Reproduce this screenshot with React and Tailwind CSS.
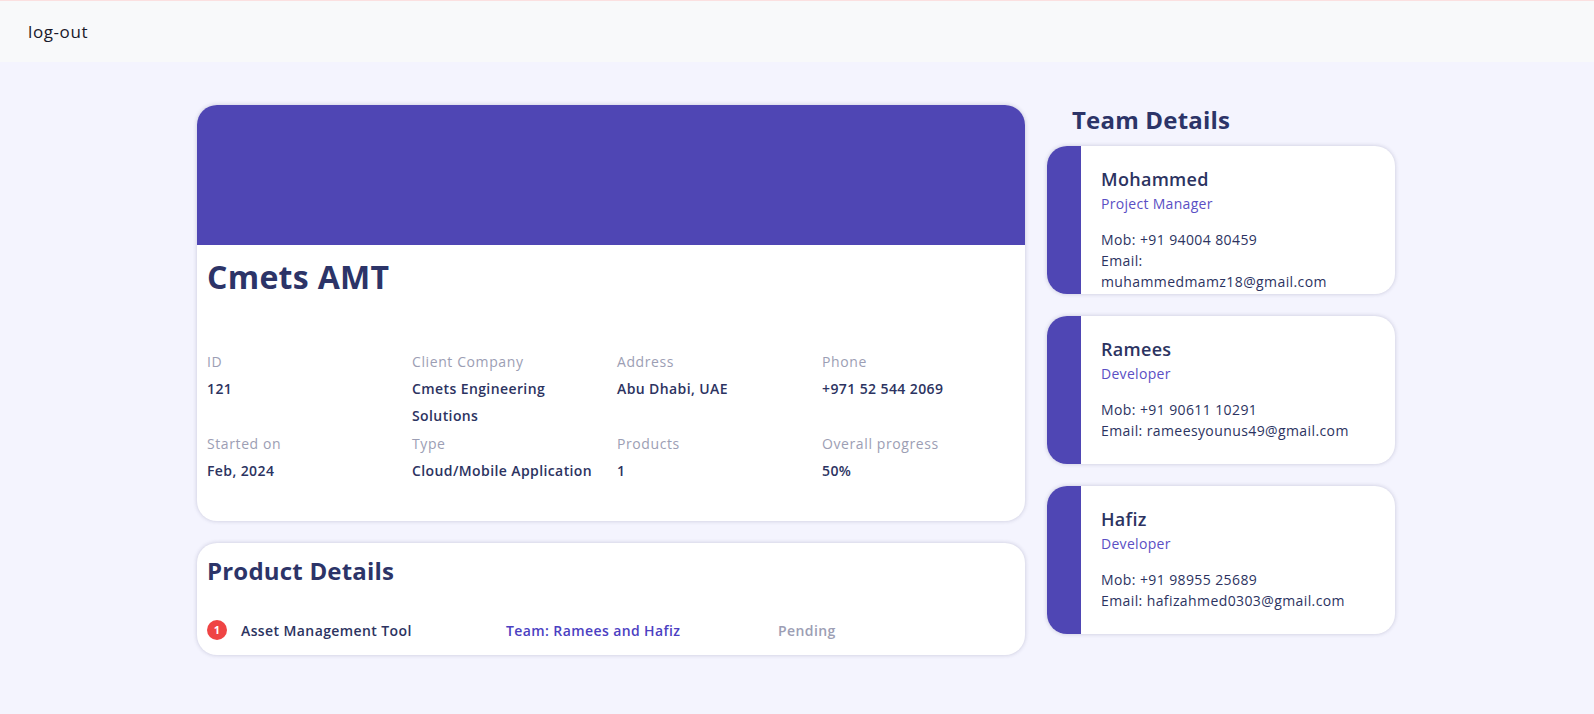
import React from "react";

const fields = [
  [
    { label: "ID", value: "121" },
    { label: "Client Company", value: "Cmets Engineering Solutions" },
    { label: "Address", value: "Abu Dhabi, UAE" },
    { label: "Phone", value: "+971 52 544 2069" },
  ],
  [
    { label: "Started on", value: "Feb, 2024" },
    { label: "Type", value: "Cloud/Mobile Application" },
    { label: "Products", value: "1" },
    { label: "Overall progress", value: "50%" },
  ],
];

const team = [
  { name: "Mohammed", role: "Project Manager", mob: "+91 94004 80459", email: "muhammedmamz18@gmail.com", wrap: true },
  { name: "Ramees", role: "Developer", mob: "+91 90611 10291", email: "rameesyounus49@gmail.com" },
  { name: "Hafiz", role: "Developer", mob: "+91 98955 25689", email: "hafizahmed0303@gmail.com" },
];

function TeamCard({ m }) {
  return (
    <div className="flex h-[148px] overflow-hidden rounded-[20px] bg-white shadow-[0_0_4px_rgba(40,40,90,0.22)]">
      <div className="w-[34px] shrink-0 bg-[#4f46b4]" />
      <div className="flex-1 pl-[20px] pr-2 pt-[20px]">
        <div className="text-[18px] font-semibold leading-[27px] tracking-[0.3px] text-[#2c3361]">{m.name}</div>
        <div className="text-[14px] leading-[22px] tracking-[0.3px] text-[#5a4fc4]">{m.role}</div>
        <div className="mt-[14px] text-[14px] leading-[21px] tracking-[0.4px] text-[#2c3361]">
          <div>Mob: {m.mob}</div>
          {m.wrap ? (
            <>
              <div>Email:</div>
              <div>{m.email}</div>
            </>
          ) : (
            <div>Email: {m.email}</div>
          )}
        </div>
      </div>
    </div>
  );
}

export default function App() {
  return (
    <div className="min-h-screen bg-[#f4f4fe] font-['Open_Sans',sans-serif]">
      <header className="flex h-[62px] items-center border-t border-[#fbe0e0] bg-[#f8f9fa] pl-[28px]">
        <span className="text-[17px] tracking-[0.6px] text-[#1a1a2a]">log-out</span>
      </header>

      <main className="mx-auto flex w-[1200px] pt-[43px]">
        <div className="flex w-[828px] flex-col gap-[22px]">
          <section className="overflow-hidden rounded-[20px] bg-white shadow-[0_0_4px_rgba(40,40,90,0.22)]">
            <div className="h-[140px] bg-[#4f46b4]" />
            <div className="flex flex-col gap-[2px] px-[10px] pb-[37px] pt-[8px]">
              <h1 className="mb-[46px] text-[32px] font-bold leading-[48px] tracking-[0.3px] text-[#2c3468]">Cmets AMT</h1>
              {fields.map((row, i) => (
                <div key={i} className="grid grid-cols-[205px_205px_205px_1fr]">
                  {row.map((f) => (
                    <div key={f.label}>
                      <div className="text-[14px] leading-[26px] tracking-[0.6px] text-[#9c9eb4]">{f.label}</div>
                      <div className="max-w-[190px] text-[14px] font-semibold leading-[27px] tracking-[0.4px] text-[#2c3361]">{f.value}</div>
                    </div>
                  ))}
                </div>
              ))}
            </div>
          </section>

          <section className="rounded-[20px] bg-white px-[10px] pb-[13px] pt-[10px] shadow-[0_0_4px_rgba(40,40,90,0.22)]">
            <h2 className="text-[24px] font-bold leading-[36px] tracking-[0.2px] text-[#2c3468]">Product Details</h2>
            <div className="mt-[29px] flex h-[24px] items-center text-[14px] font-semibold tracking-[0.4px]">
              <span className="flex h-[20px] w-[20px] items-center justify-center rounded-full bg-[#ef4444] text-[11px] font-bold tracking-normal text-white">1</span>
              <span className="ml-[14px] w-[265px] text-[#2c3361]">Asset Management Tool</span>
              <span className="w-[272px] text-[#4c3fc2]">Team: Ramees and Hafiz</span>
              <span className="text-[#9c9eb4]">Pending</span>
            </div>
          </section>
        </div>

        <aside className="ml-[22px] w-[348px] -mt-[3px]">
          <h2 className="pl-[25px] text-[24px] font-bold leading-[36px] tracking-[0.2px] text-[#2c3468]">Team Details</h2>
          <div className="mt-[8px] flex flex-col gap-[22px]">
            {team.map((m) => (
              <TeamCard key={m.name} m={m} />
            ))}
          </div>
        </aside>
      </main>
    </div>
  );
}
